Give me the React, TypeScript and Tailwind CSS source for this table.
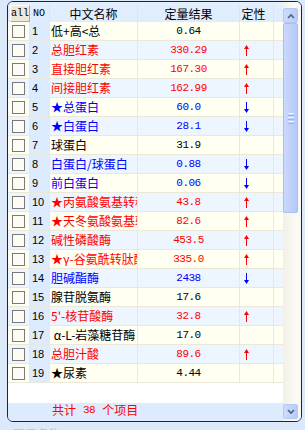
import React from "react";

type Row = { no: number; name: string; val: string; c: "k" | "r" | "b"; f: "" | "u" | "d" };

const rows: Row[] = [
  { no: 1, name: "低+高<总", val: "0.64", c: "k", f: "" },
  { no: 2, name: "总胆红素", val: "330.29", c: "r", f: "u" },
  { no: 3, name: "直接胆红素", val: "167.30", c: "r", f: "u" },
  { no: 4, name: "间接胆红素", val: "162.99", c: "r", f: "u" },
  { no: 5, name: "★总蛋白", val: "60.0", c: "b", f: "d" },
  { no: 6, name: "★白蛋白", val: "28.1", c: "b", f: "d" },
  { no: 7, name: "球蛋白", val: "31.9", c: "k", f: "" },
  { no: 8, name: "白蛋白/球蛋白", val: "0.88", c: "b", f: "d" },
  { no: 9, name: "前白蛋白", val: "0.06", c: "b", f: "d" },
  { no: 10, name: "★丙氨酸氨基转移酶", val: "43.8", c: "r", f: "u" },
  { no: 11, name: "★天冬氨酸氨基转移酶", val: "82.6", c: "r", f: "u" },
  { no: 12, name: "碱性磷酸酶", val: "453.5", c: "r", f: "u" },
  { no: 13, name: "★γ-谷氨酰转肽酶", val: "335.0", c: "r", f: "u" },
  { no: 14, name: "胆碱酯酶", val: "2438", c: "b", f: "d" },
  { no: 15, name: "腺苷脱氨酶", val: "17.6", c: "k", f: "" },
  { no: 16, name: "5'-核苷酸酶", val: "32.8", c: "r", f: "u" },
  { no: 17, name: " α-L-岩藻糖苷酶", val: "17.0", c: "k", f: "" },
  { no: 18, name: "总胆汁酸", val: "89.6", c: "r", f: "u" },
  { no: 19, name: "★尿素", val: "4.44", c: "k", f: "" },
];

const colorCls = { k: "text-black", r: "text-[#ff0000]", b: "text-[#0000ff]" };

function UpArrow() {
  return (
    <svg width="5" height="11" viewBox="0 0 5 11">
      <path d="M2.5 0 L5 4 H3 V11 H2 V4 H0 Z" fill="#ff0000" />
    </svg>
  );
}
function DownArrow() {
  return (
    <svg width="5" height="11" viewBox="0 0 5 11">
      <path d="M2.5 11 L5 7 H3 V0 H2 V7 H0 Z" fill="#0000ff" />
    </svg>
  );
}

function ScrollBtn({ up }: { up: boolean }) {
  return (
    <div className="h-[15px] w-[15px] rounded-[2px] border border-[#b4c8f4] bg-gradient-to-r from-[#cddcfd] to-[#b7cbf7] flex items-center justify-center">
      <svg width="8" height="6" viewBox="0 0 8 6">
        {up ? (
          <polyline points="1,5 4,2 7,5" fill="none" stroke="#4d6185" strokeWidth="1.6" />
        ) : (
          <polyline points="1,1 4,4 7,1" fill="none" stroke="#4d6185" strokeWidth="1.6" />
        )}
      </svg>
    </div>
  );
}

export default function App() {
  return (
    <div className="w-[305px] h-[430px] bg-[#dce9fb] overflow-hidden pt-px pl-[7px] font-['Noto_Sans_CJK_SC',sans-serif]">
      <div className="w-[295px] h-[421px] border border-[#0b1d8c] rounded-[6px] overflow-hidden flex bg-white">
        <div className="w-[275px] flex flex-col">
          <div className="h-[3px] bg-[#e4effc]" />
          <div className="h-[17px] flex bg-[#dfedfd] text-[12px] leading-[17px] text-black">
            <div className="w-[22px] border-r border-[#e6e4d4] pl-[2px]">
              <div className="w-[20px] h-[17px] bg-[#ece9d8] border-t border-l border-white border-r border-b border-r-[#aca899] border-b-[#aca899] flex items-center justify-center font-['Liberation_Mono',monospace] text-[10px] leading-none">
                all
              </div>
            </div>
            <div className="w-[20px] border-r border-[#e6e4d4] pl-[3px] font-['Liberation_Mono',monospace] text-[10px]">NO</div>
            <div className="w-[88px] border-r border-[#e6e4d4] text-center">中文名称</div>
            <div className="w-[102px] border-r border-[#e6e4d4] text-center">定量结果</div>
            <div className="w-[34px] border-r border-[#e6e4d4] text-center pr-[6px]">定性</div>
            <div className="w-[9px]" />
          </div>
          {rows.map((r, i) => (
            <div
              key={r.no}
              className={`h-[19px] flex border-b border-[#ebe8d8] ${i % 2 === 0 ? "bg-[#fffff2]" : "bg-[#edf5ff]"} ${colorCls[r.c]}`}
            >
              <div className="w-[22px] border-r border-[#ebe8d8] flex items-center pl-[4px]">
                <div className="w-[13px] h-[13px] border border-[#7a7a7a] bg-[#fcfcf5]" />
              </div>
              <div className="w-[20px] border-r border-[#ebe8d8] bg-[#dcebfd] text-black font-['Liberation_Sans',sans-serif] text-[11px] leading-[18px] pl-[2px]">
                {r.no}
              </div>
              <div className="w-[88px] border-r border-[#ebe8d8] overflow-hidden whitespace-pre text-[12px] leading-[18px] pl-[1px]">
                {r.name}
              </div>
              <div className="w-[102px] border-r border-[#ebe8d8] text-center font-['Liberation_Mono',monospace] text-[11px] tracking-[-0.5px] leading-[18px]">
                {r.val}
              </div>
              <div className="w-[34px] border-r border-[#ebe8d8] flex items-center pl-[4px]">
                {r.f === "u" ? <UpArrow /> : r.f === "d" ? <DownArrow /> : null}
              </div>
              <div className="w-[9px]" />
            </div>
          ))}
          <div className="flex-1 bg-white" />
          <div className="h-[18px] bg-[#dcebfd] pl-[44px] flex items-start text-[#ff0000] text-[12px] leading-[14px]">
            <span>共计</span>
            <span className="ml-[7px] font-['Liberation_Mono',monospace] text-[11px] tracking-[-0.5px] leading-[14px]">38</span>
            <span className="ml-[7px]">个项目</span>
          </div>
        </div>
        <div className="w-[15px] flex flex-col pt-[6px] pb-[2px] bg-gradient-to-r from-[#f2f0e6] to-[#fcfcf9]">
          <ScrollBtn up />
          <div className="h-[190px] rounded-[2px] border border-[#a9bef1] bg-gradient-to-r from-[#cad9fd] to-[#b4c8f8] flex flex-col items-center justify-center gap-[1px]">
            <div className="w-[6px] h-px bg-[#eef3ff]" />
            <div className="w-[6px] h-px bg-[#9fb5ea]" />
            <div className="w-[6px] h-px bg-[#eef3ff]" />
            <div className="w-[6px] h-px bg-[#9fb5ea]" />
            <div className="w-[6px] h-px bg-[#eef3ff]" />
            <div className="w-[6px] h-px bg-[#9fb5ea]" />
          </div>
          <div className="flex-1" />
          <ScrollBtn up={false} />
        </div>
        <div className="w-[3px] bg-[#f8f7f1]" />
      </div>
      <div className="mt-[5px] ml-[6px] text-[12px] leading-[14px] text-[#c4c4c4]">项目名称</div>
    </div>
  );
}
